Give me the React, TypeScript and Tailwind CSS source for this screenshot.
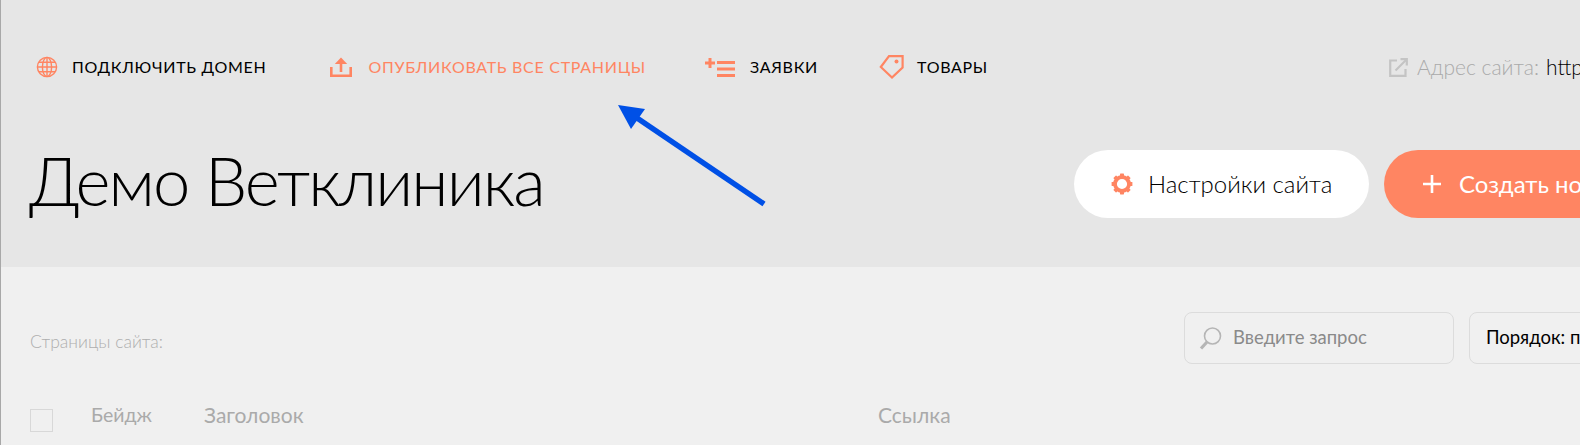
const font = "font-['Lato','Noto_Sans',sans-serif]";

function NavLink({ icon, label, color, ml }: { icon: React.ReactNode; label: string; color: string; ml: string }) {
  return (
    <div className={`flex items-center ${ml}`}>
      {icon}
      <span className={`text-[16px] tracking-[0.7px] uppercase whitespace-nowrap ${color}`}>{label}</span>
    </div>
  );
}

const C = "#ff8562";

export default function App() {
  return (
    <div className={`relative w-[1580px] h-[445px] overflow-hidden border-l border-[#a8a8a8] bg-[#f0f0f0] ${font}`}>
      <div className="h-[267px] bg-[#e6e6e6]">
        <div className="flex items-center h-[30px] pt-[52px] box-content">
          <NavLink
            ml="ml-[35px]"
            color="text-black"
            label="Подключить домен"
            icon={
              <svg className="w-[22px] h-[22px] mr-[14px]" viewBox="0 0 22 22" fill="none" stroke={C} strokeWidth="1.4">
                <circle cx="11" cy="11" r="9.6" />
                <ellipse cx="11" cy="11" rx="4.6" ry="9.6" />
                <path d="M11 1.4v19.2M1.4 11h19.2M2.8 6.2h16.4M2.8 15.8h16.4" />
              </svg>
            }
          />
          <NavLink
            ml="ml-[64px]"
            color="text-[#ff8562]"
            label="Опубликовать все страницы"
            icon={
              <svg className="w-[22px] h-[20px] mr-[16px]" viewBox="0 0 22 20" fill="none" stroke={C} strokeWidth="2.6">
                <path d="M1.3 10v8.7h19.4V10" />
                <path d="M11 15V4" />
                <path d="M4.8 7 11 .5 17.2 7z" fill={C} stroke="none" />
              </svg>
            }
          />
          <NavLink
            ml="ml-[59px]"
            color="text-black"
            label="Заявки"
            icon={
              <svg className="w-[31px] h-[20px] mr-[14px]" viewBox="0 0 31 20" fill="none" stroke={C} strokeWidth="3">
                <path d="M0 6h10M5 1v10" />
                <path d="M12 5.5h18M12 12h18M12 18.5h18" />
              </svg>
            }
          />
          <NavLink
            ml="ml-[61px]"
            color="text-black"
            label="Товары"
            icon={
              <svg className="w-[25px] h-[24px] mr-[13px]" viewBox="0 0 25 24" fill="none" stroke={C} strokeWidth="2.2">
                <path d="M1.8 12 10 1.2h13.6v11.3L13 22.5z" />
                <circle cx="17.5" cy="6.5" r="2" fill={C} stroke="none" />
              </svg>
            }
          />
          <div className="flex items-center ml-auto mr-[-299px] w-[490px] shrink-0 whitespace-nowrap">
            <svg className="w-[19px] h-[19px] mr-[9px]" viewBox="0 0 19 19" fill="none" stroke="#c4c4c4" strokeWidth="2.2">
              <path d="M8 2.5H1.2v15.3h15.3V11" />
              <path d="M6.5 12.5 17 2" />
              <path d="M11.5 1.2h6.3v6.3" />
            </svg>
            <span className="text-[21px] font-light text-[#aaaaaa]">Адрес сайта:</span>
            <span className="text-[21px] font-light text-black ml-[7px]">https://demo-vet.ru</span>
          </div>
        </div>

        <div className="flex items-start mt-[68px]">
          <h1 className="ml-[28px] text-[67px] leading-[60px] tracking-[-1.9px] font-light text-black whitespace-nowrap">Демо Ветклиника</h1>
          <div className="ml-auto flex shrink-0 gap-[15px] -mr-[304px]">
            <button className="flex items-center w-[295px] h-[68px] rounded-[34px] bg-white pl-[37px]">
              <svg className="w-[22px] h-[22px] mr-[15px]" viewBox="0 0 22 22">
                <circle cx="11" cy="11" r="7" fill="none" stroke={C} strokeWidth="3.8" />
                <g fill={C}>
                  <rect x="9" y="0.6" width="4" height="4" rx="0.6" />
                  <rect x="9" y="0.6" width="4" height="4" rx="0.6" transform="rotate(45 11 11)" />
                  <rect x="9" y="0.6" width="4" height="4" rx="0.6" transform="rotate(90 11 11)" />
                  <rect x="9" y="0.6" width="4" height="4" rx="0.6" transform="rotate(135 11 11)" />
                  <rect x="9" y="0.6" width="4" height="4" rx="0.6" transform="rotate(180 11 11)" />
                  <rect x="9" y="0.6" width="4" height="4" rx="0.6" transform="rotate(225 11 11)" />
                  <rect x="9" y="0.6" width="4" height="4" rx="0.6" transform="rotate(270 11 11)" />
                  <rect x="9" y="0.6" width="4" height="4" rx="0.6" transform="rotate(315 11 11)" />
                </g>
              </svg>
              <span className="text-[24px] font-light text-black whitespace-nowrap">Настройки сайта</span>
            </button>
            <button className="flex items-center w-[500px] h-[68px] rounded-[34px] bg-[#ff8562] pl-[39px]">
              <svg className="w-[18px] h-[18px] mr-[18px]" viewBox="0 0 18 18" stroke="white" strokeWidth="2.6">
                <path d="M0 9h18M9 0v18" />
              </svg>
              <span className="text-[24px] text-white whitespace-nowrap">Создать новую страницу</span>
            </button>
          </div>
        </div>
      </div>

      <div className="flex items-center mt-[45px] pl-[29px]">
        <span className="text-[17.5px] font-light text-[#aeaeae] whitespace-nowrap w-[1154px] shrink-0 pt-[8px]">Страницы сайта:</span>
        <div className="flex items-center shrink-0 w-[270px] h-[52px] rounded-[8px] border border-[#dcdcdc] pl-[14px]">
          <svg className="w-[23px] h-[24px] mr-[11px]" viewBox="0 0 23 24" fill="none">
            <circle cx="13.5" cy="10" r="8" stroke="#b5b5b5" strokeWidth="1.6" />
            <path d="M8 16 2 22.5" stroke="#b5b5b5" strokeWidth="3.2" />
          </svg>
          <span className="text-[18.5px] text-[#8a8a8a] whitespace-nowrap">Введите запрос</span>
        </div>
        <div className="flex items-center shrink-0 w-[300px] h-[52px] rounded-[8px] border border-[#dcdcdc] ml-[15px] pl-[16px]">
          <span className="text-[18.5px] text-black whitespace-nowrap">Порядок: по дате</span>
        </div>
      </div>

      <div className="flex items-start h-[23px] mt-[45px] pl-[29px] text-[21px] leading-[12px] text-[#aaaaaa]">
        <div className="w-[23px] h-[23px] border border-[#d8d8d8]" />
        <span className="ml-[38px] w-[113px] text-[19.5px]">Бейдж</span>
        <span className="w-[674px]">Заголовок</span>
        <span>Ссылка</span>
      </div>

      <svg className="absolute left-[599px] top-[90px] w-[180px] h-[125px]" viewBox="600 90 180 125">
        <path d="M764 204 637 118" stroke="#0050e6" strokeWidth="5.5" fill="none" />
        <path d="M618 105 645 109 631 129z" fill="#0050e6" />
      </svg>
    </div>
  );
}
